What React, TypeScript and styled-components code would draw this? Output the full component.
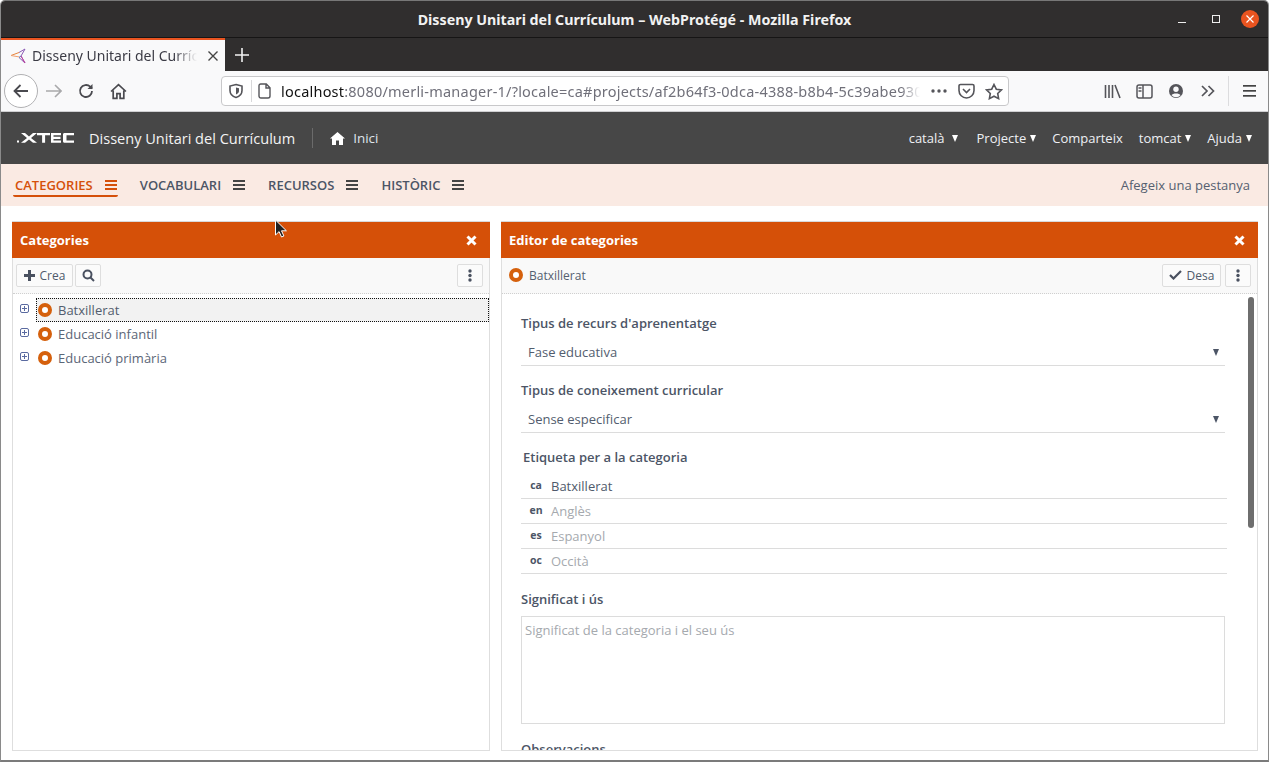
import React from "react";
import styled, { createGlobalStyle } from "styled-components";

const Global = createGlobalStyle`
  html, body { margin: 0; padding: 0; width: 1269px; height: 762px; overflow: hidden; background: #fff; }
  * { box-sizing: border-box; }
  body { font-family: "Open Sans", "Noto Sans", sans-serif; }
`;

const Win = styled.div`
  position: relative; width: 1269px; height: 762px; display: flex; flex-direction: column;
  background: #fff; border: 1px solid #8a8a8a; border-top-color: #777; border-bottom: 2px solid #7b7b7b; overflow: hidden;
  border-radius: 5px 5px 0 0;
`;
const TitleBar = styled.div`
  height: 37px; flex: none; background: #302e2e; border-bottom: 1px solid #161515; position: relative;
  display: flex; align-items: center; justify-content: center;
  color: #f2f2f2; font: 700 14.25px "Noto Sans", "Open Sans", sans-serif; padding-top: 1px;
`;
const WinButtons = styled.div`
  position: absolute; top: 0; right: 0; height: 36px; display: flex; align-items: center; padding: 0 1px 0 0;
`;
const WinBtn = styled.span<{ $w: number }>`
  width: ${(p) => p.$w}px; display: flex; justify-content: center; align-items: center;
`;
const CloseDot = styled.span`
  width: 18px; height: 18px; border-radius: 50%; background: #e95420; display: flex; align-items: center; justify-content: center;
`;
const TabBar = styled.div`
  height: 33px; flex: none; background: #302e2e; display: flex; align-items: stretch;
`;
const Tab = styled.div`
  width: 224px; background: #f9f9fa; border-top: 2px solid #e95420; display: flex; align-items: center;
  padding: 0 6px 0 9px; color: #3b3b45; font: 400 14px "Noto Sans", sans-serif; gap: 6px;
`;
const TabTitle = styled.span`
  width: 165px; overflow: hidden; white-space: nowrap; margin-right: 4px;
  -webkit-mask-image: linear-gradient(to right, #000 86%, transparent);
  mask-image: linear-gradient(to right, #000 86%, transparent);
`;
const NewTab = styled.span`
  width: 34px; display: flex; align-items: center; justify-content: center;
`;
const NavToolbar = styled.div`
  height: 41px; flex: none; background: #f9f9fa; border-bottom: 1px solid #cfcfd1; display: flex; align-items: center; padding: 0 0 0 3px;
`;
const BackCircle = styled.span`
  width: 34px; height: 34px; border-radius: 50%; border: 1px solid #b1b1b3; background: #fff; display: flex; align-items: center; justify-content: center; margin-right: 3px;
`;
const ToolIcon = styled.span<{ $w?: number }>`
  width: ${(p) => p.$w ?? 32}px; height: 32px; display: flex; align-items: center; justify-content: center; flex: none;
`;
const UrlBar = styled.div`
  width: 788px; height: 30px; margin-left: 90px; background: #fff; border: 1px solid #c8c8ca; border-radius: 4px; display: flex; align-items: center; flex: none;
`;
const UrlSep = styled.span`
  width: 1px; height: 22px; background: #d8d8da; margin: 0 6px 0 1px;
`;
const UrlText = styled.div`
  width: 639px; overflow: hidden; white-space: nowrap; font: 400 14.5px "Noto Sans", sans-serif; color: #70707a; margin-left: 9px; letter-spacing: 0.22px;
  -webkit-mask-image: linear-gradient(to right, #000 97%, transparent);
  mask-image: linear-gradient(to right, #000 97%, transparent);
  b { font-weight: 400; color: #111; }
`;
const UrlIcons = styled.div`
  display: flex; align-items: center; margin-left: auto; padding-right: 1px;
`;
const Spacer = styled.span`
  flex: 1;
`;
const ToolSep = styled.span`
  width: 1px; height: 30px; background: #dcdcde; margin: 0 2px 0 4px;
`;

const AppHeader = styled.div`
  height: 52px; flex: none; background: #474747; display: flex; align-items: center; padding: 0 16px 0 16px; color: #f0f0f0; font-size: 13px;
`;
const Logo = styled.span`
  display: flex; width: 58px; margin-right: 14px;
`;
const AppTitle = styled.span`
  font-size: 14.55px; color: #f4f4f4;
`;
const HeadSep = styled.span`
  width: 1px; height: 20px; background: #6b6b6b; margin: 0 17px 0 17px;
`;
const HomeLabel = styled.span`
  font-size: 13.4px; color: #dfe3ea; margin-left: 8px;
`;
const HeadMenu = styled.div`
  margin-left: auto; display: flex; gap: 16px; align-items: center;
`;
const HeadItem = styled.span`
  display: inline-flex; align-items: center; gap: 4px; font-size: 13px; color: #eef0f4; white-space: nowrap;
`;
const LangItem = styled(HeadItem)`
  margin-right: 3px;
`;
const Caret = styled.i<{ $c?: string; $gap?: number }>`
  display: inline-block; width: 0; height: 0; border-left: 3.5px solid transparent; border-right: 3.5px solid transparent;
  border-top: 7px solid ${(p) => p.$c ?? "#fff"}; margin-left: ${(p) => p.$gap ?? 0}px; margin-top: 1px;
`;

const SubNav = styled.div`
  height: 42px; flex: none; background: #faeae3; display: flex; align-items: center; padding: 0 18px 0 12px; font-size: 13px; font-weight: 600; color: #4c5566;
`;
const SubTab = styled.div<{ $on?: boolean }>`
  display: flex; align-items: center; gap: 12px; height: 23px; padding: 0 1px 0 2px; margin-right: 20px; margin-top: 1px;
  color: ${(p) => (p.$on ? "#d5500a" : "#4c5566")};
  border-bottom: 2px solid ${(p) => (p.$on ? "#d5500a" : "transparent")};
  border-radius: 0 0 2px 2px; white-space: nowrap;
`;
const Burger = styled.span<{ $c: string }>`
  width: 12px; height: 10px; flex: none;
  border-top: 2px solid ${(p) => p.$c}; border-bottom: 2px solid ${(p) => p.$c}; position: relative;
  &::after { content: ""; position: absolute; left: 0; right: 0; top: 2px; height: 2px; background: ${(p) => p.$c}; }
`;
const AddTab = styled.span`
  margin-left: auto; font-size: 13px; font-weight: 400; color: #555f70;
`;

const Content = styled.div`
  flex: 1; min-height: 0; display: grid; grid-template-columns: 478px 757px; gap: 11px; padding: 15px 10px 9px 11px;
`;
const Panel = styled.section`
  border: 1px solid #dedede; border-top: 0; min-height: 0; display: flex; flex-direction: column; background: #fff;
`;
const PanelHead = styled.header`
  height: 37px; flex: none; background: #d55008; color: #fff; display: flex; align-items: center; justify-content: space-between;
  padding: 0 13px 0 8px; font-size: 13px; font-weight: 700; margin: 0 -1px; border-top: 1px solid #d9d9d9;
`;
const Toolbar = styled.div<{ $pl: number }>`
  height: 36px; flex: none; background: #f9f9f9; border-bottom: 1px dotted #cfcfcf; display: flex; align-items: center; padding: 0 6px 1px ${(p) => p.$pl}px; gap: 2px;
`;
const Btn = styled.span<{ $w: number }>`
  width: ${(p) => p.$w}px; height: 23px; border: 1px solid #dedede; border-radius: 2px; background: #fbfbfb; display: inline-flex; align-items: center; justify-content: center; gap: 5px;
  font-size: 12px; color: #4f5a6b; flex: none;
`;
const Right = styled.span`
  margin-left: auto; display: flex; gap: 4px;
`;
const Tree = styled.div`
  padding: 4px 0 0 5px; display: flex; flex-direction: column; flex: 1;
`;
const TreeRow = styled.div`
  display: flex; align-items: center; height: 24px; position: relative;
`;
const Expander = styled.span`
  width: 18px; flex: none; display: flex; margin-bottom: 4px; padding-left: 2px;
`;
const Node = styled.div<{ $sel?: boolean }>`
  flex: 1; height: 24px; display: flex; align-items: center; gap: 6px; padding-left: 2px; font-size: 13px; color: #5b6677;
  ${(p) => p.$sel && `background: #f2f2f2; outline: 1px dotted #111; outline-offset: -1px; color:#525d6e;`}
`;
const Ring = styled.span`
  width: 14px; height: 14px; border-radius: 50%; border: 4.5px solid #d5600c; background: #fff; flex: none;
`;
const EntityName = styled.span`
  font-size: 12px; color: #545f70; margin-left: 4px;
`;
const Body = styled.div`
  flex: 1; min-height: 0; overflow: hidden; padding: 21px 32px 0 19px; position: relative;
`;
const Thumb = styled.span`
  position: absolute; right: 3px; top: 3px; width: 6px; height: 231px; background: #6e6e6e; border-radius: 3px;
`;
const Label = styled.div<{ $ml?: number; $mt?: number }>`
  font-size: 13px; font-weight: 600; color: #4c5566; height: 17px; line-height: 17px; margin-left: ${(p) => p.$ml ?? 0}px; margin-top: ${(p) => p.$mt ?? 0}px;
`;
const Select = styled.div`
  height: 25px; margin-top: 9px; border-bottom: 1px solid #dcdcdc; display: flex; align-items: center; justify-content: space-between;
  padding: 0 6px 3px 7px; font-size: 13px; color: #525d6e;
`;
const LangList = styled.div`
  margin-top: 8px; margin-right: -2px; display: flex; flex-direction: column;
`;
const LangRow = styled.div`
  height: 25px; border-bottom: 1px solid #dcdcdc; display: flex; align-items: center; padding-bottom: 1px;
`;
const LangCode = styled.span`
  width: 30px; text-align: center; font-size: 10.5px; font-weight: 700; color: #4c5566; padding-bottom: 2px; flex: none;
`;
const LangVal = styled.span<{ $ph?: boolean }>`
  font-size: 13px; color: ${(p) => (p.$ph ? "#a5a9ae" : "#4f5a6b")};
`;
const TextArea = styled.div`
  margin-top: 8px; height: 108px; border: 1px solid #dcdcdc; padding: 4px 3px; font-size: 13px; color: #a5a9ae;
`;
const Cursor = styled.svg`
  position: absolute; left: 273px; top: 218px;
`;

const I = { s: "#4a4a4f" };

const Shield = () => (
  <svg width="16" height="16" viewBox="0 0 16 16" fill="none" stroke="#55555a" strokeWidth="1.6"><path d="M8 1.5 14 3v4.5c0 3.5-2.6 6-6 7-3.4-1-6-3.5-6-7V3z" /><path d="M8 4.5 11 5.3V8c0 1.6-1.2 2.8-3 3.4z" fill="#55555a" stroke="none" /></svg>
);

export default function App() {
  return (
    <Win>
      <Global />
      <TitleBar>
        Disseny Unitari del Currículum – WebProtégé - Mozilla Firefox
        <WinButtons>
          <WinBtn $w={34}><svg width="10" height="10"><rect x="1" y="8" width="8" height="1" fill="#eee" /></svg></WinBtn>
          <WinBtn $w={34}><svg width="10" height="10"><rect x="1.5" y="1.5" width="7" height="7" fill="none" stroke="#eee" /></svg></WinBtn>
          <WinBtn $w={34}><CloseDot><svg width="10" height="10" stroke="#fff" strokeWidth="1.2"><path d="M1.5 1.5l7 7M8.5 1.5l-7 7" /></svg></CloseDot></WinBtn>
        </WinButtons>
      </TitleBar>
      <TabBar>
        <Tab>
          <svg width="16" height="16" viewBox="0 0 16 16" fill="none" strokeWidth="1"><path d="M1 7.5 9 4.5" stroke="#e8853a" /><path d="M1 7.5 9.5 9" stroke="#f0a070" /><path d="M9 4.5 15 1 11 8l4 7-6-5.5" stroke="#8a5ab5" /><path d="M11 8 9 9.5" stroke="#4a86c5" /><path d="M15 15 11 8" stroke="#c0409a" /></svg>
          <TabTitle>Disseny Unitari del Currículum – WebProtégé</TabTitle>
          <svg width="12" height="12" stroke="#444" strokeWidth="1.4"><path d="M1.5 1.5l9 9M10.5 1.5l-9 9" /></svg>
        </Tab>
        <NewTab><svg width="14" height="14" stroke="#f2f2f2" strokeWidth="1.6"><path d="M7 0v14M0 7h14" /></svg></NewTab>
      </TabBar>
      <NavToolbar>
        <BackCircle><svg width="18" height="18" fill="none" stroke={I.s} strokeWidth="1.8"><path d="M16 9H2.5M8.5 3 2.5 9l6 6" /></svg></BackCircle>
        <ToolIcon $w={26}><svg width="16" height="16" fill="none" stroke="#a9a9ab" strokeWidth="1.6"><path d="M0 8h15M9 2l6 6-6 6" /></svg></ToolIcon>
        <ToolIcon $w={38}><svg width="16" height="16" viewBox="0 0 16 16" fill="none" stroke={I.s} strokeWidth="1.8"><path d="M14 8a6 6 0 1 1-1.8-4.3L14 5.5" /><path d="M14.5 1v5h-5" fill={I.s} stroke="none" /></svg></ToolIcon>
        <ToolIcon $w={26}><svg width="17" height="17" viewBox="0 0 16 16" fill="none" stroke={I.s} strokeWidth="1.6"><path d="M1 8 8 1.5 15 8M3 7v7.5h3.5V10h3v4.5H13V7" /></svg></ToolIcon>
        <UrlBar>
          <ToolIcon $w={28}><Shield /></ToolIcon>
          <UrlSep />
          <svg width="14" height="16" viewBox="0 0 14 16" fill="none" stroke="#55555a" strokeWidth="1.4"><path d="M2.7 1h5.6L12 4.8V13a2 2 0 0 1-2 2H3a2 2 0 0 1-2-2V2.7A1.7 1.7 0 0 1 2.7 1zM8 1v4h4" /></svg>
          <UrlText><b>localhost</b>:8080/merli-manager-1/?locale=ca#projects/af2b64f3-0dca-4388-b8b4-5c39abe930</UrlText>
          <UrlIcons>
            <ToolIcon $w={24}><svg width="16" height="4"><circle cx="2" cy="2" r="1.7" fill="#55555a" /><circle cx="8" cy="2" r="1.7" fill="#55555a" /><circle cx="14" cy="2" r="1.7" fill="#55555a" /></svg></ToolIcon>
            <ToolIcon $w={30}><svg width="17" height="16" viewBox="0 0 17 16" fill="none" stroke="#55555a" strokeWidth="1.6"><path d="M2.5 1.5h12A1.5 1.5 0 0 1 16 3v4.5a7.5 7.5 0 0 1-15 0V3a1.5 1.5 0 0 1 1.5-1.5z" /><path d="M5 6l3.5 3.5L12 6" /></svg></ToolIcon>
            <ToolIcon $w={26}><svg width="18" height="17" viewBox="0 0 18 17" fill="none" stroke="#55555a" strokeWidth="1.6"><path d="M9 1.5l2.3 4.7 5.2.7-3.8 3.6.9 5.1L9 13.2l-4.6 2.4.9-5.1L1.5 6.9l5.2-.7z" /></svg></ToolIcon>
          </UrlIcons>
        </UrlBar>
        <Spacer />
        <ToolIcon><svg width="17" height="15" viewBox="0 0 17 15" fill="none" stroke="#55555a" strokeWidth="1.6"><path d="M1.5 1v13M5 1v13M8.5 1v13M11 1l5 13" /></svg></ToolIcon>
        <ToolIcon><svg width="17" height="15" viewBox="0 0 17 15" fill="none" stroke="#55555a" strokeWidth="1.5"><rect x="1" y="1" width="15" height="13" rx="2" /><path d="M7 1v13" /><path d="M2.5 4h3M2.5 7h3" /></svg></ToolIcon>
        <ToolIcon><svg width="16" height="16" viewBox="0 0 16 16"><circle cx="8" cy="8" r="7" fill="#55555a" /><circle cx="8" cy="6.2" r="2.7" fill="#f9f9fa" /><path d="M3.5 12.2c1-2.2 8-2.2 9 0A6 6 0 0 1 3.5 12.2z" fill="#f9f9fa" /></svg></ToolIcon>
        <ToolIcon><svg width="14" height="12" viewBox="0 0 14 12" fill="none" stroke="#55555a" strokeWidth="1.7"><path d="M1 1l5 5-5 5M7.5 1l5 5-5 5" /></svg></ToolIcon>
        <ToolSep />
        <ToolIcon $w={37}><svg width="13" height="12" fill="#444"><rect width="13" height="1.7" /><rect y="5" width="13" height="1.7" /><rect y="10" width="13" height="1.7" /></svg></ToolIcon>
      </NavToolbar>
      <AppHeader>
        <Logo><svg width="58" height="10" viewBox="0 0 58 10" fill="#fff"><rect x="0" y="7.5" width="2" height="2" /><path d="M4 0h4l4 3.4L16 0h4l-6 5 6 4.8h-4l-4-3.2-4 3.2H4l6-4.8z" /><path d="M20 0h13v2.2h-4.9v7.6h-3V2.2H20z" /><path d="M34 0h10v2.2h-7.5v1.6h7V6h-7v1.6H44v2.2H34z" /><path d="M47 0h10v2.2h-7.5v5.4H57v2.2H47a1.5 1.5 0 0 1-1-1.2V1.2A1.5 1.5 0 0 1 47 0z" /></svg></Logo>
        <AppTitle>Disseny Unitari del Currículum</AppTitle>
        <HeadSep />
        <svg width="15" height="13" viewBox="0 0 15 13" fill="#fff"><path d="M7.5 0 15 6.5h-2V13H9V8.5H6V13H2V6.5H0z" /></svg>
        <HomeLabel>Inici</HomeLabel>
        <HeadMenu>
          <LangItem>català <Caret $gap={3} /></LangItem>
          <HeadItem>Projecte<Caret /></HeadItem>
          <HeadItem>Comparteix</HeadItem>
          <HeadItem>tomcat<Caret /></HeadItem>
          <HeadItem>Ajuda<Caret /></HeadItem>
        </HeadMenu>
      </AppHeader>
      <SubNav>
        <SubTab $on>CATEGORIES<Burger $c="#d5500a" /></SubTab>
        <SubTab>VOCABULARI<Burger $c="#444" /></SubTab>
        <SubTab>RECURSOS<Burger $c="#444" /></SubTab>
        <SubTab>HISTÒRIC<Burger $c="#444" /></SubTab>
        <AddTab>Afegeix una pestanya</AddTab>
      </SubNav>
      <Content>
        <Panel>
          <PanelHead>Categories<X /></PanelHead>
          <Toolbar $pl={3}>
            <Btn $w={57}><svg width="11" height="11" fill="#4a5160"><rect x="4" width="3" height="11" /><rect y="4" width="11" height="3" /></svg>Crea</Btn>
            <Btn $w={26}><svg width="13" height="13" fill="none" stroke="#4a5160" strokeWidth="2"><circle cx="5.5" cy="5.5" r="4" /><path d="M8.5 8.5 12 12" /></svg></Btn>
            <Right><Btn $w={26}><Dots /></Btn></Right>
          </Toolbar>
          <Tree>
            {["Batxillerat", "Educació infantil", "Educació primària"].map((t, i) => (
              <TreeRow key={t}>
                <Expander><svg width="9" height="9" fill="none" stroke="#5a6aa0"><rect x=".5" y=".5" width="8" height="8" rx="1.5" /><path d="M2 4.5h5M4.5 2v5" /></svg></Expander>
                <Node $sel={i === 0}><Ring />{t}</Node>
              </TreeRow>
            ))}
          </Tree>
        </Panel>
        <Panel>
          <PanelHead>Editor de categories<X /></PanelHead>
          <Toolbar $pl={7}>
            <Ring /><EntityName>Batxillerat</EntityName>
            <Right>
              <Btn $w={59}><svg width="13" height="10" fill="none" stroke="#4a5160" strokeWidth="2.2"><path d="M1 5l3.5 3.5L12 1" /></svg>Desa</Btn>
              <Btn $w={26}><Dots /></Btn>
            </Right>
          </Toolbar>
          <Body>
            <Thumb />
            <Label>Tipus de recurs d'aprenentatge</Label>
            <Select>Fase educativa<Caret $c="#4c5566" /></Select>
            <Label $mt={16}>Tipus de coneixement curricular</Label>
            <Select>Sense especificar<Caret $c="#4c5566" /></Select>
            <Label $ml={2} $mt={16}>Etiqueta per a la categoria</Label>
            <LangList>
              <LangRow><LangCode>ca</LangCode><LangVal>Batxillerat</LangVal></LangRow>
              <LangRow><LangCode>en</LangCode><LangVal $ph>Anglès</LangVal></LangRow>
              <LangRow><LangCode>es</LangCode><LangVal $ph>Espanyol</LangVal></LangRow>
              <LangRow><LangCode>oc</LangCode><LangVal $ph>Occità</LangVal></LangRow>
            </LangList>
            <Label $mt={17}>Significat i ús</Label>
            <TextArea>Significat de la categoria i el seu ús</TextArea>
            <Label $mt={17}>Observacions</Label>
          </Body>
        </Panel>
      </Content>
      <Cursor width="14" height="20" viewBox="0 0 14 20"><path d="M1.5 1v15l3.6-3.4 2.4 5.4 2.4-1-2.4-5.2h4.9z" fill="#222" stroke="#fff" strokeWidth="1" /></Cursor>
    </Win>
  );
}

function X() {
  return <svg width="11" height="11" fill="none" stroke="#fff" strokeWidth="3"><path d="M1.5 1.5l8 8M9.5 1.5l-8 8" /></svg>;
}
function Dots() {
  return <svg width="4" height="13" fill="#4a5160"><circle cx="2" cy="2" r="1.7" /><circle cx="2" cy="6.5" r="1.7" /><circle cx="2" cy="11" r="1.7" /></svg>;
}
